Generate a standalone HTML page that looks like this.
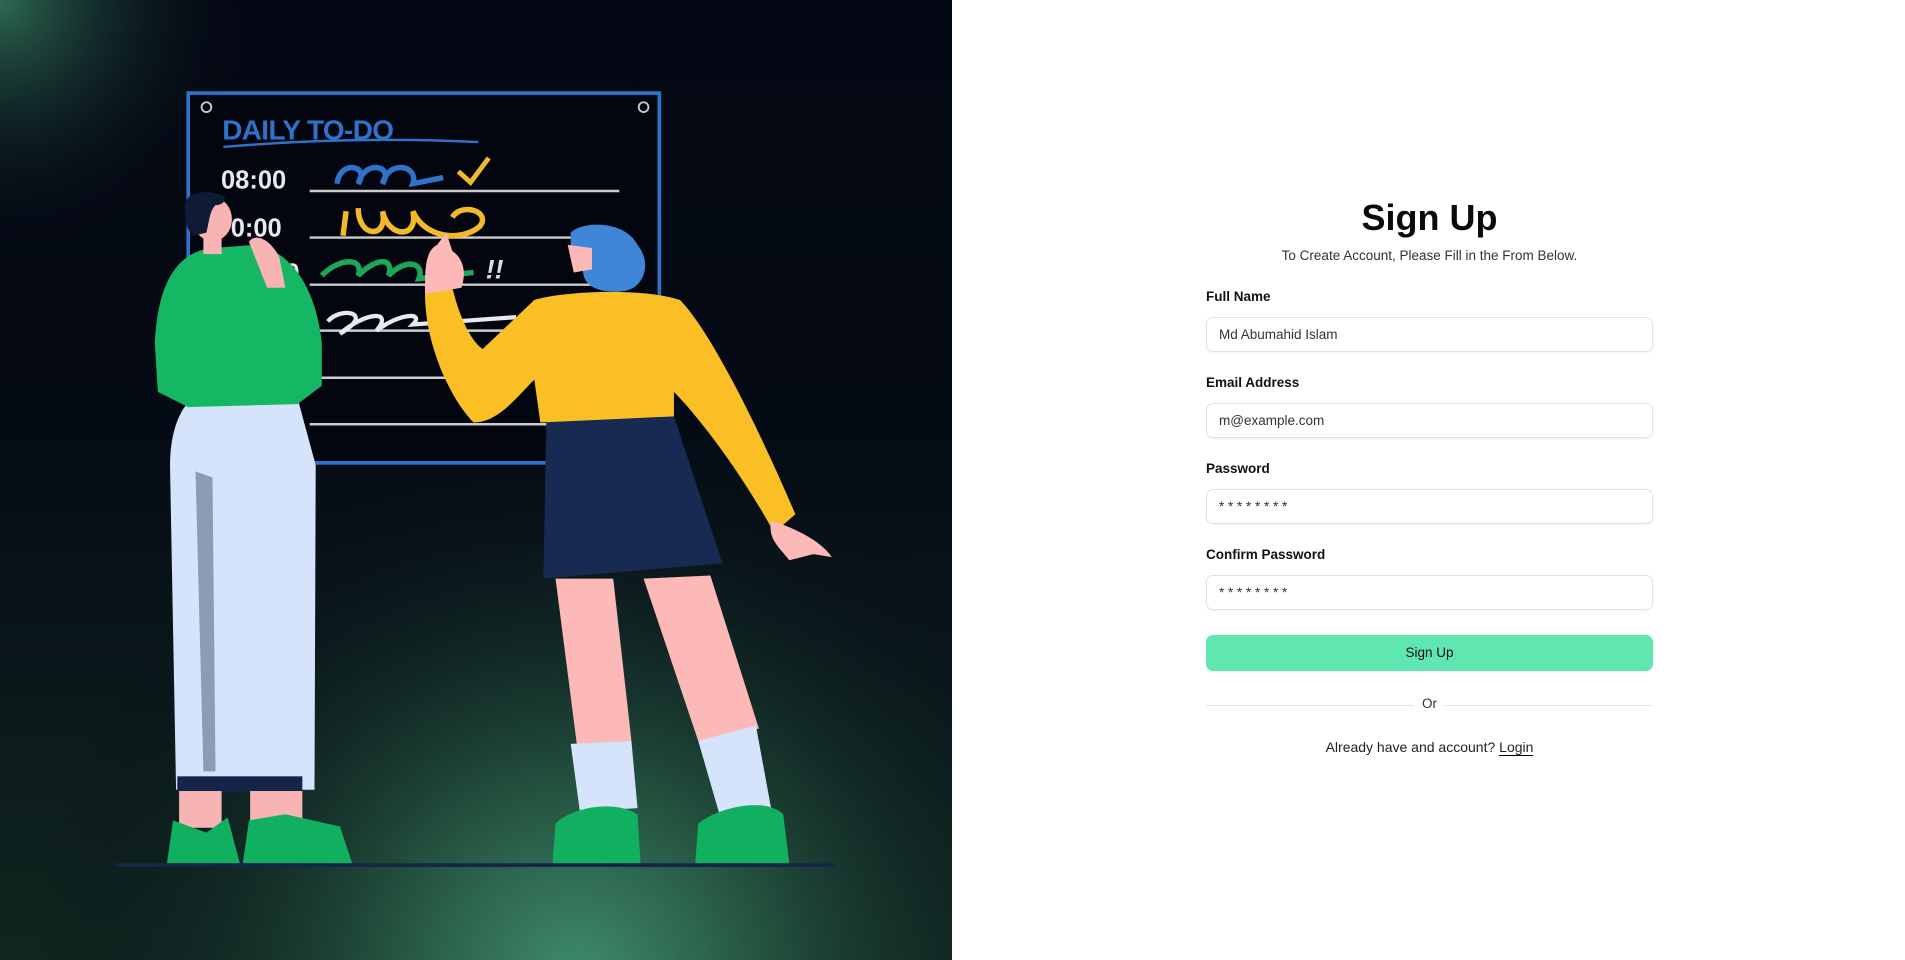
<!DOCTYPE html>
<html><head><meta charset="utf-8"><style>
*{box-sizing:border-box;margin:0;padding:0}
body{width:1905px;height:960px;overflow:hidden;background:#fff;font-family:"Liberation Sans",Roboto,sans-serif;position:relative}
#left{position:absolute;left:0;top:0;width:952px;height:960px;overflow:hidden;background:#040814}
#right{position:absolute;left:952px;top:0;width:953px;height:960px;background:#fff}
.form{position:absolute;left:254px;top:0;width:447px}
h1{position:absolute;top:197px;left:0;width:447px;text-align:center;font-size:36px;font-weight:bold;color:#0a0a0a}
.sub{position:absolute;top:248px;left:0;width:447px;text-align:center;font-size:13.5px;color:#333}
label{position:absolute;left:0;font-size:13.5px;font-weight:bold;color:#111}
.inp{position:absolute;left:0;width:447px;height:35px;border:1px solid #e2e2e2;border-radius:7px;box-shadow:0 1px 2px rgba(0,0,0,.06);font-size:13.5px;color:#333;padding:0 12px;line-height:33px}
.btn{position:absolute;left:0;top:635px;width:447px;height:36px;background:#60e6b0;border-radius:7px;text-align:center;line-height:36px;font-size:13.5px;color:#111}
.or{position:absolute;top:696px;left:0;width:447px;text-align:center;font-size:13.5px;color:#333}
.or:before,.or:after{content:"";position:absolute;top:9px;height:1px;background:#e3e3e3;width:208px}
.or:before{left:0}.or:after{right:0}
.al{position:absolute;top:739px;left:0;width:447px;text-align:center;font-size:14px;color:#222}
.al u{text-decoration:none;border-bottom:1px solid #000}
</style></head><body>
<div id="left">
<svg width="952" height="960" viewBox="0 0 1568 1568" preserveAspectRatio="none">
<defs>
<linearGradient id="lg" x1="0" y1="0" x2="0" y2="1"><stop offset="0" stop-color="#040814"/><stop offset=".45" stop-color="#050b15"/><stop offset="1" stop-color="#10261f"/></linearGradient>
<radialGradient id="g1" cx="950" cy="1600" r="900" gradientUnits="userSpaceOnUse"><stop offset="0" stop-color="#3f8c6c"/><stop offset=".35" stop-color="#24523f"/><stop offset="1" stop-color="#040814" stop-opacity="0"/></radialGradient>
<radialGradient id="g2" cx="0" cy="0" r="420" gradientUnits="userSpaceOnUse"><stop offset="0" stop-color="#2d6a52"/><stop offset="1" stop-color="#040814" stop-opacity="0"/></radialGradient>
</defs>
<rect width="1568" height="1568" fill="url(#lg)"/>
<rect width="1568" height="1568" fill="url(#g1)"/>
<rect width="1568" height="1568" fill="url(#g2)"/>
<rect x="310" y="152" width="776" height="604" fill="#03060f" stroke="#2f72c9" stroke-width="6"/>
<circle cx="340" cy="175" r="8" fill="none" stroke="#ccc" stroke-width="3"/>
<circle cx="1060" cy="175" r="8" fill="none" stroke="#ccc" stroke-width="3"/>
<text x="366" y="228" font-family="Liberation Sans" font-weight="bold" font-size="46" fill="#2f72c9" letter-spacing="-1">DAILY TO-DO</text>
<path d="M368 240 Q580 222 788 232" stroke="#2f72c9" stroke-width="4" fill="none"/>
<g font-family="Liberation Sans" font-weight="bold" font-size="42" fill="#e8e8ee"><text x="364" y="308">08:00</text><text x="380" y="386">0:00</text><text x="470" y="460">0</text></g>
<g stroke="#ccc" stroke-width="4"><line x1="510" y1="312" x2="1020" y2="312"/><line x1="510" y1="388" x2="1010" y2="388"/><line x1="510" y1="465" x2="1000" y2="465"/><line x1="510" y1="540" x2="990" y2="540"/><line x1="510" y1="617" x2="980" y2="617"/><line x1="510" y1="693" x2="980" y2="693"/></g>
<path d="M555 300 C560 260 610 270 590 300 C600 260 650 270 630 300 C640 260 690 270 680 300 L730 290" stroke="#2f72c9" stroke-width="9" fill="none"/>
<path d="M755 280 L775 298 L805 258" stroke="#f2b928" stroke-width="8" fill="none"/>
<path d="M570 345 L565 385 M590 340 C590 390 640 390 630 345 C640 390 690 390 680 345 C700 390 760 395 790 370 C810 345 760 330 745 355" stroke="#f2b928" stroke-width="9" fill="none"/>
<path d="M530 450 C560 420 600 420 590 450 C620 420 650 420 640 450 C670 420 700 430 690 455 L780 445" stroke="#1ba65a" stroke-width="9" fill="none"/>
<text x="800" y="455" font-family="Liberation Sans" font-weight="bold" font-size="44" fill="#ddd" font-style="italic">!!</text>
<path d="M540 525 C560 500 620 510 560 545 C600 510 650 505 620 540 C660 510 700 510 680 530 L850 518" stroke="#e8e8ee" stroke-width="7" fill="none"/>
<!-- man -->
<path d="M290 1290 L280 760 C280 700 300 660 320 650 L490 650 L520 760 L518 1290 Z" fill="#d6e4fb"/>
<path d="M322 770 L350 780 L355 1260 L335 1260 Z" fill="#8e9bb5"/>
<rect x="292" y="1268" width="206" height="26" fill="#15254a"/>
<rect x="295" y="1292" width="70" height="60" fill="#f8b3b3"/>
<rect x="412" y="1292" width="86" height="50" fill="#f8b3b3"/>
<path d="M275 1410 L285 1340 L340 1360 L375 1335 L395 1410 Z" fill="#10b060"/>
<path d="M400 1410 L410 1340 L470 1330 L560 1350 L580 1410 Z" fill="#10b060"/>
<path d="M255 560 C260 450 300 410 350 405 L420 400 C480 410 520 470 530 560 L530 630 L490 660 L310 665 L260 640 Z" fill="#15b764"/>
<rect x="335" y="370" width="30" height="45" fill="#f8b3b3"/>
<ellipse cx="350" cy="358" rx="32" ry="36" fill="#f8b3b3"/>
<path d="M305 345 C300 315 330 308 365 318 C375 322 370 335 355 335 C345 345 345 360 340 380 L318 385 C305 370 305 360 305 345Z" fill="#0f1a36"/>
<path d="M410 395 C420 380 445 390 460 420 L470 470 L440 470 Z" fill="#f8b3b3"/>
<!-- woman -->
<path d="M915 945 L1010 945 L1040 1210 L950 1215 Z" fill="#fdb8b8"/>
<path d="M1060 945 L1170 940 L1250 1190 L1150 1210 Z" fill="#fdb8b8"/>
<path d="M940 1215 L1040 1210 L1050 1320 L955 1325 Z" fill="#d6e4fb"/>
<path d="M1150 1210 L1245 1185 L1270 1320 L1185 1330 Z" fill="#d6e4fb"/>
<path d="M910 1410 L915 1345 C940 1320 1010 1305 1050 1330 L1055 1410 Z" fill="#10b060"/>
<path d="M1145 1410 L1150 1345 C1180 1320 1260 1300 1290 1330 L1300 1410 Z" fill="#10b060"/>
<path d="M900 680 L1110 680 L1190 920 L895 945 Z" fill="#172a52"/>
<path d="M880 490 C930 475 1060 470 1120 490 C1170 540 1250 700 1310 840 L1275 870 C1220 770 1150 680 1110 640 L1110 680 L890 690 L880 620 C850 650 820 690 780 690 C740 650 700 560 700 480 L745 470 C760 530 780 560 795 570 Z" fill="#f9bf25"/>
<path d="M700 480 C700 440 700 410 720 400 L735 380 L745 410 C760 420 770 440 760 470 Z" fill="#fdb8b8"/>
<path d="M1270 850 C1300 860 1350 880 1370 910 L1340 905 L1300 915 C1280 890 1265 880 1270 850Z" fill="#fdb8b8"/>
<path d="M940 380 C960 360 1030 360 1050 400 C1075 430 1060 470 1030 475 C990 480 960 470 960 440 L940 420 Z" fill="#3f86d9"/>
<path d="M935 400 L975 405 L975 440 L945 445 Z" fill="#fdb8b8"/>
<line x1="190" y1="1413" x2="1375" y2="1413" stroke="#16264a" stroke-width="6"/>
</svg>
</div>
<div id="right"><div class="form">
<h1>Sign Up</h1>
<div class="sub">To Create Account, Please Fill in the From Below.</div>
<label style="top:289px">Full Name</label>
<div class="inp" style="top:317px">Md Abumahid Islam</div>
<label style="top:375px">Email Address</label>
<div class="inp" style="top:403px">m@example.com</div>
<label style="top:461px">Password</label>
<div class="inp" style="top:489px">* * * * * * * *</div>
<label style="top:547px">Confirm Password</label>
<div class="inp" style="top:575px">* * * * * * * *</div>
<div class="btn">Sign Up</div>
<div class="or">Or</div>
<div class="al">Already have and account? <u>Login</u></div>
</div></div>
</body></html>
